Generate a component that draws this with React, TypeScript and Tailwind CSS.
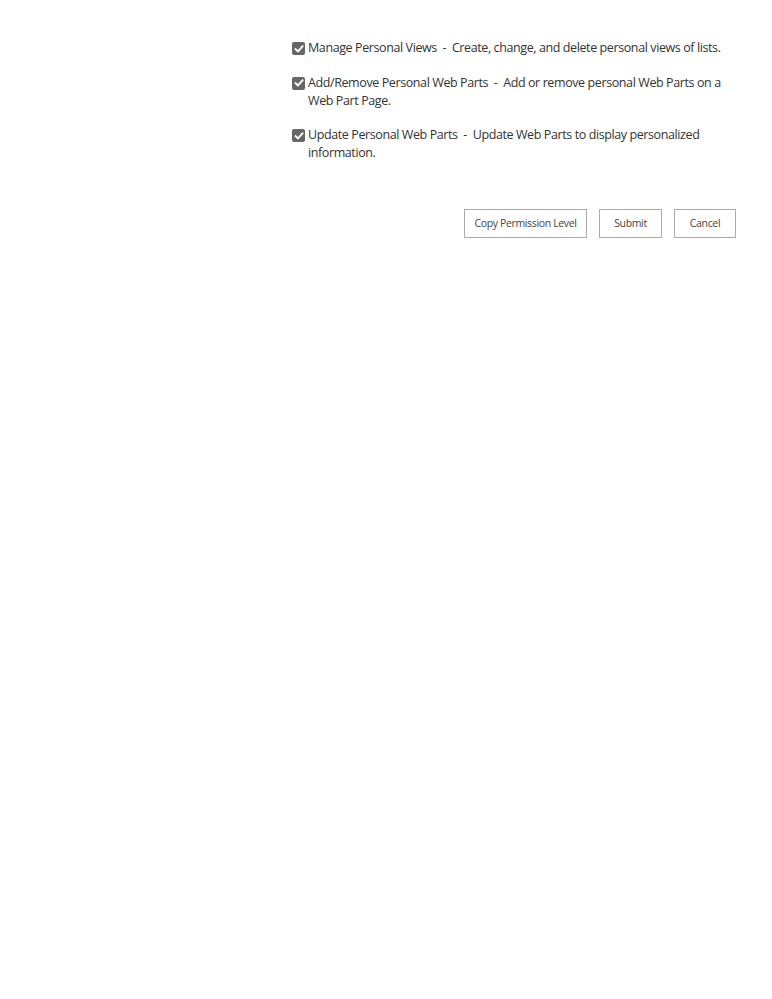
import React from "react";

function Check() {
  return (
    <span className="mt-[3px] mr-[3px] flex h-[13px] w-[13px] shrink-0 items-center justify-center rounded-[2px] bg-[#666666]">
      <svg width="10" height="10" viewBox="0 0 10 10">
        <path d="M1.6 5.2 L4 7.5 L8.5 2.4" fill="none" stroke="#ffffff" strokeWidth="1.9" strokeLinecap="square" />
      </svg>
    </span>
  );
}

const items = [
  ["Manage Personal Views", "Create, change, and delete personal views of lists."],
  ["Add/Remove Personal Web Parts", "Add or remove personal Web Parts on a Web Part Page."],
  ["Update Personal Web Parts", "Update Web Parts to display personalized information."],
];

export default function App() {
  return (
    <div className="min-h-[999px] w-[772px] bg-white text-[#333333]" style={{ fontFamily: '"Open Sans", "Noto Sans", sans-serif' }}>
      <div className="ml-[292px] w-[446px] pt-[39px]">
        <div className="flex flex-col gap-[16.5px]">
          {items.map(([t, d]) => (
            <div key={t} className="flex items-start">
              <Check />
              <div className="text-[12.5px] leading-[18px] tracking-[-0.4px]">
                {t}{"\u00a0\u00a0-\u00a0\u00a0"}{d}
              </div>
            </div>
          ))}
        </div>
        <div className="mt-[47px] flex justify-end gap-[12px] pr-[2px]">
          <button className="h-[29px] w-[123px] border border-[#ababab] bg-white text-[10.5px] tracking-[-0.35px] text-[#444444]">Copy Permission Level</button>
          <button className="h-[29px] w-[63px] border border-[#ababab] bg-white text-[10.5px] tracking-[-0.35px] text-[#444444]">Submit</button>
          <button className="h-[29px] w-[62px] border border-[#ababab] bg-white text-[10.5px] tracking-[-0.35px] text-[#444444]">Cancel</button>
        </div>
      </div>
    </div>
  );
}
